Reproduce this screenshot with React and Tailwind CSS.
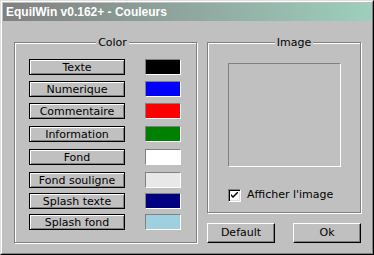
import { useState } from "react";

const colors = [
  { label: "Texte", color: "bg-[#000000]", extra: "" },
  { label: "Numerique", color: "bg-[#0000ff]", extra: "" },
  { label: "Commentaire", color: "bg-[#ff0000]", extra: "" },
  { label: "Information", color: "bg-[#008000]", extra: "mt-px" },
  { label: "Fond", color: "bg-[#ffffff]", extra: "mt-px" },
  { label: "Fond souligne", color: "bg-[#e8e8e8]", extra: "mt-px" },
  { label: "Splash texte", color: "bg-[#000080]", extra: "-mt-px" },
  { label: "Splash fond", color: "bg-[#9fd0e0]", extra: "-mt-px" },
];

function WinButton({ children, className = "" }) {
  return (
    <button
      className={`h-[20px] w-[68px] bg-[#c0c0c0] border border-t-white border-l-white border-r-black border-b-black shadow-[inset_-1px_-1px_0_#808080] text-[11px] text-black ${className}`}
    >
      {children}
    </button>
  );
}

export default function App() {
  const [showImage, setShowImage] = useState(true);

  return (
    <div className="w-[374px] h-[255px] bg-[#c0c0c0] border border-t-[#dfdfdf] border-l-[#dfdfdf] border-r-black border-b-black font-['DejaVu_Sans',sans-serif] text-black">
      <div className="h-full border border-t-white border-l-white border-r-[#808080] border-b-[#808080] p-px flex flex-col">
        {/* title bar */}
        <div className="h-[18px] bg-gradient-to-r from-[#808080] to-[#9dcfbd] flex items-center pl-[3px]">
          <span className="text-white font-bold text-[12px] font-['Liberation_Sans',sans-serif] leading-none">
            EquilWin v0.162+ - Couleurs
          </span>
        </div>

        <div className="flex pl-[11px] pt-[15px] gap-[10px]">
          {/* Color group */}
          <fieldset className="w-[183px] h-[207px] border border-[#808080] shadow-[inset_1px_1px_0_#fff,1px_1px_0_#fff] pl-[14px] pt-[10px]">
            <legend className="mx-auto px-[2px] bg-[#c0c0c0] text-[11px] leading-[13px]">Color</legend>
            <div className="flex flex-col gap-[6px]">
              {colors.map((c) => (
                <div key={c.label} className={`flex items-center gap-[20px] ${c.extra}`}>
                  <button className="w-[96px] h-[16px] border border-black bg-[#c0c0c0] shadow-[inset_1px_1px_0_#fff,inset_-1px_-1px_0_#808080] text-[11px] leading-none">
                    {c.label}
                  </button>
                  <div className={`w-[36px] h-[16px] border border-t-[#808080] border-l-[#808080] border-r-white border-b-white ${c.color}`} />
                </div>
              ))}
            </div>
          </fieldset>

          {/* Image group + buttons */}
          <div className="flex flex-col">
            <fieldset className="w-[154px] h-[177px] border border-[#808080] shadow-[inset_1px_1px_0_#fff,1px_1px_0_#fff] pl-[20px] pt-[14px]">
              <legend className="mx-auto px-[2px] bg-[#c0c0c0] text-[11px] leading-[13px]">Image</legend>
              <div className="w-[113px] h-[104px] border border-t-[#808080] border-l-[#808080] border-r-white border-b-white" />
              <label className="flex items-center gap-[6px] mt-[20px] text-[11px]">
                <span
                  onClick={() => setShowImage(!showImage)}
                  className="w-[13px] h-[13px] bg-white border border-t-[#808080] border-l-[#808080] border-r-white border-b-white shadow-[inset_1px_1px_0_#000,inset_-1px_-1px_0_#dfdfdf] flex items-center justify-center"
                >
                  {showImage && (
                    <svg width="7" height="7" viewBox="0 0 7 7">
                      <path d="M0 2 L0 4 L2 6 L7 1 L7 -1 L2 4 Z" fill="#000" />
                    </svg>
                  )}
                </span>
                Afficher l'image
              </label>
            </fieldset>
            <div className="flex gap-[18px] mt-[10px]">
              <WinButton>Default</WinButton>
              <WinButton>Ok</WinButton>
            </div>
          </div>
        </div>
      </div>
    </div>
  );
}
